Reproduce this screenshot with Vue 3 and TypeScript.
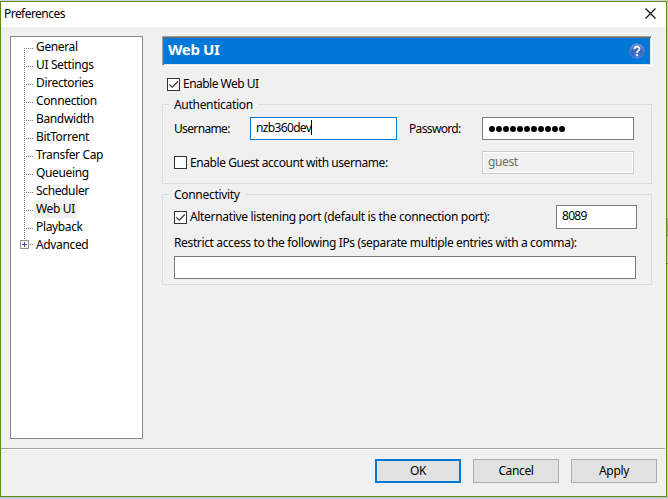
<script setup lang="ts">
import { ref } from 'vue'

interface Page {
  name: string
  expandable?: boolean
}

const pages: Page[] = [
  { name: 'General' },
  { name: 'UI Settings' },
  { name: 'Directories' },
  { name: 'Connection' },
  { name: 'Bandwidth' },
  { name: 'BitTorrent' },
  { name: 'Transfer Cap' },
  { name: 'Queueing' },
  { name: 'Scheduler' },
  { name: 'Web UI' },
  { name: 'Playback' },
  { name: 'Advanced', expandable: true },
]
const selected = ref('Web UI')
const enabled = ref(true)
const guest = ref(false)
const altPort = ref(true)
const passwordLength = 11
</script>

<template>
  <div class="desktop">
    <div class="window">
      <header class="titlebar">
        <span class="title">Preferences</span>
        <svg class="close" width="11" height="11" viewBox="0 0 11 11">
          <path d="M.5 .5 10.5 10.5M10.5 .5 .5 10.5" stroke="#000" stroke-width="1.1" fill="none" />
        </svg>
      </header>

      <main class="content">
        <nav class="tree">
          <div v-for="page in pages" :key="page.name" class="node" @click="selected = page.name">
            <svg class="branch" width="23" height="18" viewBox="0 0 23 18" shape-rendering="crispEdges">
              <template v-if="page.expandable">
                <path d="M13.5 0V5" stroke="#808080" stroke-dasharray="1 1" />
                <rect x="9.5" y="4.5" width="8" height="8" fill="#f6f6f6" stroke="#919191" />
                <path d="M11 8.500H16M13.500 6V11" stroke="#3c4f96" />
                <path d="M19 8.500H22" stroke="#808080" stroke-dasharray="1 1" />
              </template>
              <template v-else>
                <path :d="page.name === 'General' ? 'M13.5 10V18' : 'M13.5 0V18'" stroke="#808080" stroke-dasharray="1 1" />
                <path d="M13 10.500H22" stroke="#808080" stroke-dasharray="1 1" />
              </template>
            </svg>
            <span class="name" :class="{ selected: page.name === selected }">{{ page.name }}</span>
          </div>
        </nav>

        <section class="panel">
          <div class="banner">
            <span>Web UI</span>
            <svg width="16" height="16" viewBox="0 0 16 16">
              <defs>
                <radialGradient id="helpFill" cx="50%" cy="90%" r="85%">
                  <stop offset="0" stop-color="#4c86dc" />
                  <stop offset=".55" stop-color="#3a60ba" />
                  <stop offset="1" stop-color="#7796d6" />
                </radialGradient>
              </defs>
              <circle cx="8" cy="8" r="7.3" fill="url(#helpFill)" stroke="#5c86cc" stroke-width=".8" />
              <path d="M5.600 6.200C5.600 3 10.400 3 10.400 5.900C10.400 7.700 8 7.800 8 10" fill="none" stroke="#f0f3fb" stroke-width="1.8" />
              <rect x="7" y="11.200" width="2" height="1.900" fill="#f0f3fb" />
            </svg>
          </div>

          <label class="check enable" @click="enabled = !enabled">
            <span class="box"><svg v-if="enabled" width="11" height="11" viewBox="0 0 11 11"><path d="M1.300 5.400 4.200 8.200 9.800 2.500" /></svg></span>
            <span class="tight">Enable Web UI</span>
          </label>

          <div class="group auth">
            <div class="legend">Authentication</div>
            <div class="row credentials">
              <span class="label user">Username:</span>
              <div class="input focused"><span>nzb360dev</span><i class="caret"></i></div>
              <span class="label pass">Password:</span>
              <div class="input secret"><i v-for="n in passwordLength" :key="n" class="dot"></i></div>
            </div>
            <div class="row guest">
              <label class="check" @click="guest = !guest">
                <span class="box"><svg v-if="guest" width="11" height="11" viewBox="0 0 11 11"><path d="M1.300 5.400 4.200 8.200 9.800 2.500" /></svg></span>
                <span class="guest-text">Enable Guest account with username:</span>
              </label>
              <div class="input disabled"><span>guest</span></div>
            </div>
          </div>

          <div class="group connectivity">
            <div class="legend">Connectivity</div>
            <div class="row port">
              <label class="check" @click="altPort = !altPort">
                <span class="box"><svg v-if="altPort" width="11" height="11" viewBox="0 0 11 11"><path d="M1.300 5.400 4.200 8.200 9.800 2.500" /></svg></span>
                <span class="port-text">Alternative listening port (default is the connection port):</span>
              </label>
              <div class="input number"><span>8089</span></div>
            </div>
            <div class="restrict">Restrict access to the following IPs (separate multiple entries with a comma):</div>
            <div class="input wide"></div>
          </div>
        </section>
      </main>

      <footer class="actions">
        <button class="primary">OK</button>
        <button>Cancel</button>
        <button>Apply</button>
      </footer>
    </div>
  </div>
</template>

<style>
body {
  margin: 0;
  overflow: hidden;
}
</style>

<style scoped>
* {
  box-sizing: border-box;
}
.desktop {
  width: 668px;
  height: 499px;
  padding-top: 1px;
  background:
    linear-gradient(#cbc8cb, #cbc8cb) 0 100% / 100% 2px no-repeat,
    linear-gradient(#d4d4d4, #d4d4d4) 0 0 / 100% 1px no-repeat,
    linear-gradient(#c3d6ae 218px, #9fae90 218px 235px, #6c7a60 235px 236px, #b9cba6 236px 263px, #6c7a60 263px 264px, #c6d3b8 264px);
  font: 12px/18px 'Noto Sans', 'Open Sans', sans-serif;
  letter-spacing: -0.36px;
  color: #000;
  white-space: nowrap;
}
.window {
  display: flex;
  flex-direction: column;
  width: 667px;
  height: 496px;
  border: 1px solid #5a8c1e;
  background: #f0f0f0;
}
.titlebar {
  display: flex;
  justify-content: space-between;
  height: 25px;
  padding: 3px 10px 0 3px;
  background: #fff;
  letter-spacing: -0.54px;
}
.close {
  margin-top: 3px;
}
.content {
  display: flex;
  gap: 19px;
  height: 421px;
  padding: 9px 0 0 9px;
}
.tree {
  width: 133px;
  height: 403px;
  padding-top: 1px;
  border: 1px solid #828790;
  background: #fff;
}
.node {
  display: flex;
  height: 18px;
}
.branch {
  flex: none;
}
.name {
  height: 18px;
  padding: 0 2px;
}
.selected {
  background: #f0f0f0;
}
.panel {
  width: 490px;
}
.banner {
  display: flex;
  justify-content: space-between;
  height: 30px;
  padding: 2px 6px 0 5px;
  border: 1px solid #a0a0a0;
  border-right-color: #fff;
  border-bottom-color: #fff;
  box-shadow: inset 1px 1px #696969, inset -1px -1px #e3e3e3;
  background: #0078d7;
  color: #fff;
  font-size: 15px;
  font-weight: 700;
  line-height: 20px;
}
.banner svg {
  margin-top: 4px;
}
.check {
  display: flex;
  align-items: center;
  gap: 3px;
  height: 18px;
}
.tight {
  letter-spacing: -0.52px;
}
.box {
  width: 13px;
  height: 13px;
  border: 1px solid #333;
  background: #fff;
}
.box svg {
  display: block;
}
.box path {
  fill: none;
  stroke: #333;
  stroke-width: 1.2;
}
.enable {
  margin: 9px 0 0 5px;
}
.group {
  border: 1px solid #dcdcdc;
  padding-left: 11px;
}
.auth {
  height: 80px;
  margin-top: 11px;
}
.connectivity {
  height: 91px;
  margin-top: 10px;
}
.legend {
  width: 89px;
  height: 18px;
  margin: -9px 0 0 -5px;
  padding-left: 5px;
  background: #f0f0f0;
  letter-spacing: -0.3px;
}
.connectivity .legend {
  width: 77px;
}
.row {
  display: flex;
}
.credentials {
  margin-top: 3px;
  letter-spacing: -0.65px;
}
.label {
  padding-top: 3px;
}
.user {
  width: 76px;
}
.pass {
  width: 85px;
  padding-left: 12px;
}
.input {
  display: flex;
  width: 152px;
  height: 23px;
  padding: 1px 5px;
  border: 1px solid #7a7a7a;
  background: #fff;
}
.focused {
  width: 147px;
  border-color: #0078d7;
}
.caret {
  width: 1px;
  height: 15px;
  margin-top: 1px;
  background: #000;
}
.secret {
  gap: 1px;
  padding: 8px 0 0 6px;
}
.dot {
  width: 6px;
  height: 6px;
  border-radius: 50%;
  background: #000;
}
.guest {
  justify-content: space-between;
  margin-top: 11px;
  padding-right: 17px;
}
.guest .check {
  margin-top: 2px;
}
.guest-text {
  padding-top: 1px;
  letter-spacing: -0.43px;
}
.disabled {
  border-color: #ccc;
  box-shadow: inset 0 0 0 1px #fff;
  background: #f0f0f0;
  color: #6d6d6d;
}
.port {
  justify-content: space-between;
  margin-top: 1px;
  padding-right: 14px;
}
.port .check {
  margin-top: 3px;
}
.port-text {
  letter-spacing: -0.33px;
}
.number {
  width: 81px;
  height: 24px;
  letter-spacing: -0.7px;
}
.restrict {
  margin-top: 5px;
  height: 18px;
}
.wide {
  width: 462px;
  margin-top: 4px;
}
.actions {
  display: flex;
  gap: 12px;
  height: 48px;
  padding: 10px 0 0 374px;
  margin-right: 1px;
  border-top: 1px solid #a0a0a0;
  box-shadow: inset 0 1px #fff;
}
button {
  width: 86px;
  height: 24px;
  padding: 0;
  border: 1px solid #adadad;
  background: #e1e1e1;
  color: #000;
  font: inherit;
  letter-spacing: inherit;
}
.primary {
  border: 2px solid #0078d7;
}
</style>
